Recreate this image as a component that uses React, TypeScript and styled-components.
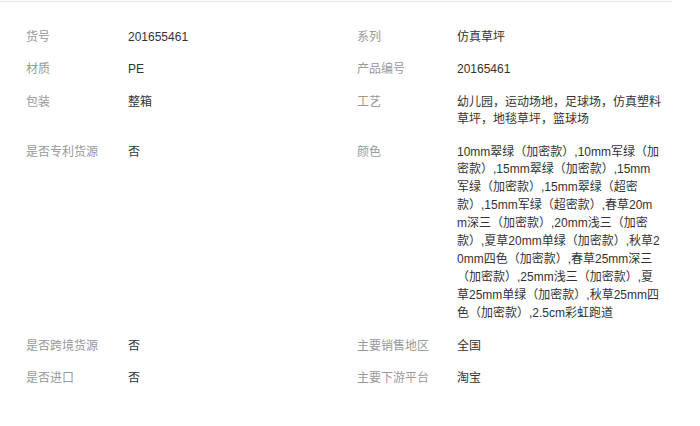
import React from "react";
import styled, { createGlobalStyle } from "styled-components";

const GlobalStyle = createGlobalStyle`
  html, body {
    margin: 0;
    padding: 0;
    background: #ffffff;
  }
  body {
    font-family: "Liberation Sans", "Noto Sans CJK SC", sans-serif;
    font-size: 12px;
  }
`;

const Panel = styled.section`
  width: 672px;
  margin-top: 1px;
  border-top: 1px solid #e6e6e6;
  padding: 19px 0 0 26px;
  box-sizing: border-box;
`;

const Grid = styled.dl`
  margin: 0;
  display: grid;
  grid-template-columns: 102px 229px 100px 204px;
  align-items: start;
`;

const Label = styled.dt`
  margin: 0;
  padding: 7.5px 0;
  color: #999999;
  line-height: 17.5px;
  white-space: nowrap;
`;

const Value = styled.dd<{ $long?: boolean }>`
  margin: 0;
  padding: 7.5px 0;
  color: #333333;
  line-height: ${(p) => (p.$long ? "17.9px" : "17.5px")};
  word-break: break-all;
`;

type Item = [string, string];

const rows: [Item, Item][] = [
  [["货号", "201655461"], ["系列", "仿真草坪"]],
  [["材质", "PE"], ["产品编号", "20165461"]],
  [["包装", "整箱"], ["工艺", "幼儿园，运动场地，足球场，仿真塑料草坪，地毯草坪，篮球场"]],
  [
    ["是否专利货源", "否"],
    [
      "颜色",
      "10mm翠绿（加密款）,10mm军绿（加密款）,15mm翠绿（加密款）,15mm军绿（加密款）,15mm翠绿（超密款）,15mm军绿（超密款）,春草20mm深三（加密款）,20mm浅三（加密款）,夏草20mm单绿（加密款）,秋草20mm四色（加密款）,春草25mm深三（加密款）,25mm浅三（加密款）,夏草25mm单绿（加密款）,秋草25mm四色（加密款）,2.5cm彩虹跑道",
    ],
  ],
  [["是否跨境货源", "否"], ["主要销售地区", "全国"]],
  [["是否进口", "否"], ["主要下游平台", "淘宝"]],
];

export default function App() {
  return (
    <>
      <GlobalStyle />
      <Panel>
        <Grid>
          {rows.map((row, i) => (
            <React.Fragment key={i}>
              {row.map(([k, v]) => (
                <React.Fragment key={k}>
                  <Label>{k}</Label>
                  <Value $long={v.length > 60}>{v}</Value>
                </React.Fragment>
              ))}
            </React.Fragment>
          ))}
        </Grid>
      </Panel>
    </>
  );
}
